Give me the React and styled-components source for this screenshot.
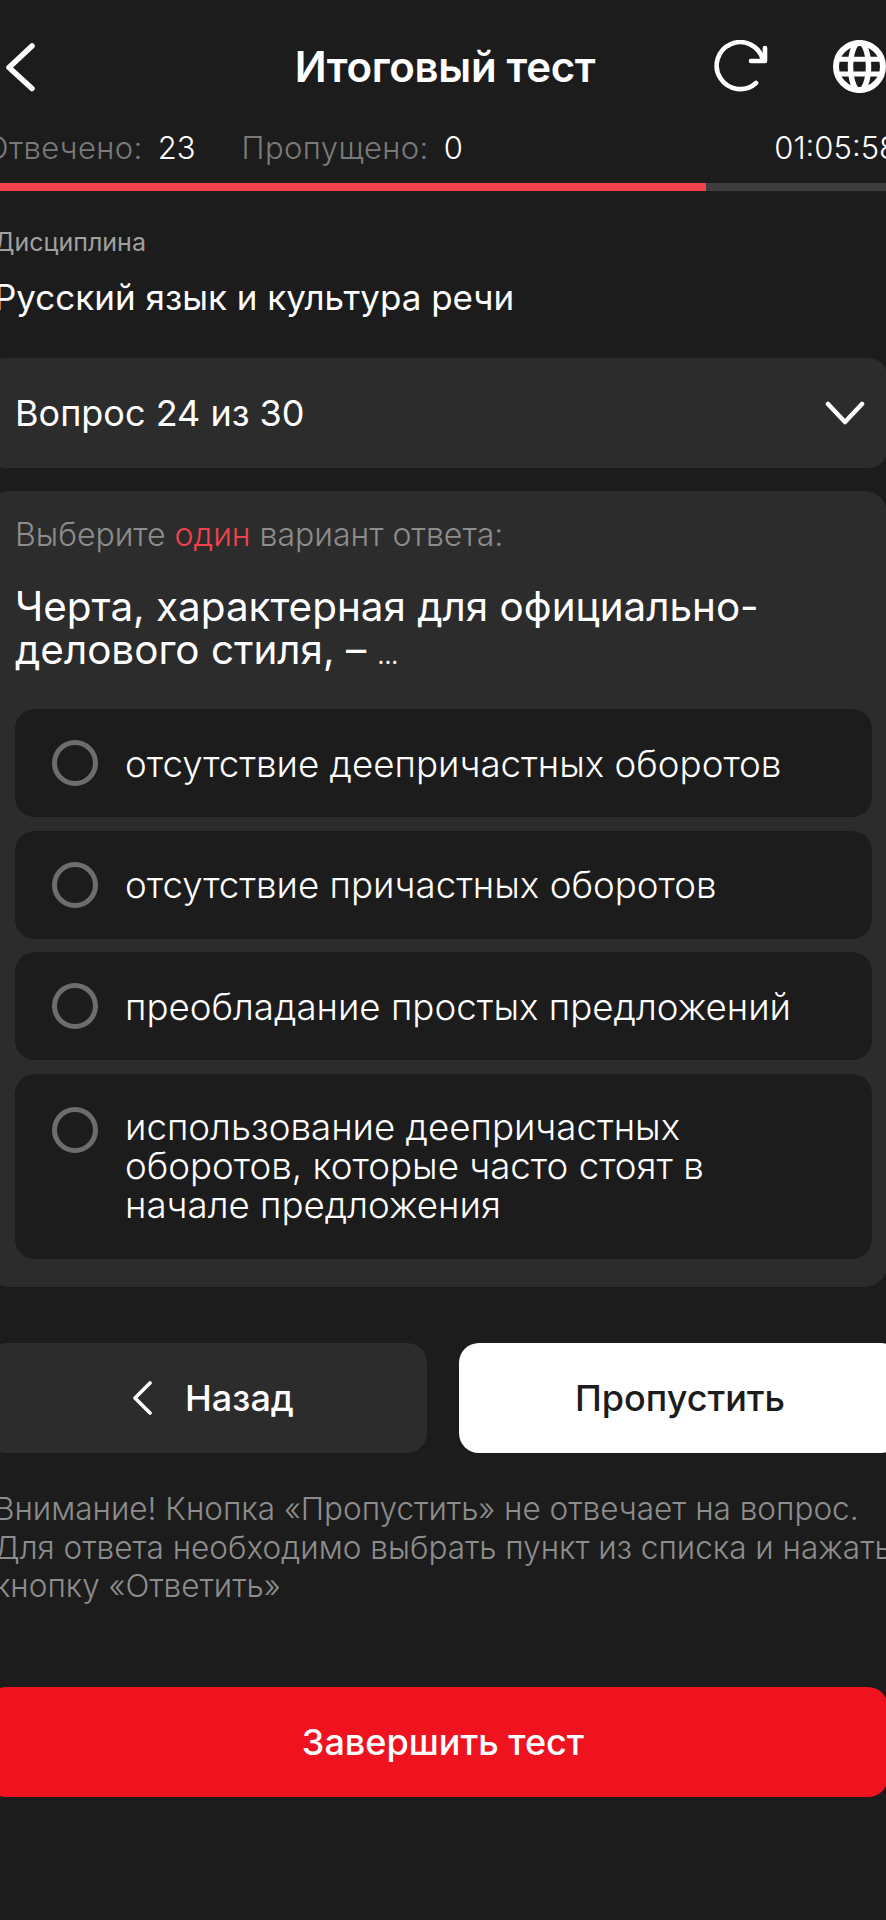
import React from "react"
import styled, { createGlobalStyle } from "styled-components"

const GlobalStyle = createGlobalStyle`
  html, body {
    margin: 0;
    padding: 0;
    background: #1c1c1c;
    font-family: "Inter", "Liberation Sans", sans-serif;
  }
  * {
    box-sizing: border-box;
  }
`

const Page = styled.div`
  width: 886px;
  height: 1920px;
  overflow: hidden;
  background: #1c1c1c;
  color: #fff;
`

const Header = styled.header`
  display: grid;
  grid-template-columns: 1fr auto 1fr;
  align-items: center;
  height: 53px;
  margin-top: 40px;
  padding: 0 2px 0 6px;
`

const Title = styled.h1`
  margin: 0;
  font-size: 42px;
  line-height: 52px;
  font-weight: 600;
  letter-spacing: -0.3px;
`

const HeaderActions = styled.div`
  display: flex;
  justify-content: flex-end;
  align-items: center;
  gap: 62px;
  margin-right: -2px;
`

const IconButton = styled.span`
  display: flex;
`

const Stats = styled.div`
  display: flex;
  align-items: center;
  height: 40px;
  margin: 34px -12px 0 -15px;
  font-size: 31px;
  font-weight: 300;
`

const StatLabel = styled.span`
  color: #7a7a7a;
  margin-right: 15px;
  letter-spacing: 0.4px;
`

const StatValue = styled.span`
  color: #fff;
  margin-right: 46px;
`

const Timer = styled.span`
  margin-left: auto;
`

const Progress = styled.div`
  height: 8px;
  margin-top: 16px;
  background: #3d3d3d;
`

const ProgressFill = styled.div`
  height: 100%;
  width: ${p => p.$value};
  background: #f5414e;
`

const Discipline = styled.section`
  margin: 36px 0 0 -6px;
`

const DisciplineLabel = styled.div`
  color: #a0a0a0;
  font-size: 25px;
  line-height: 30px;
`

const DisciplineName = styled.div`
  margin-top: 19px;
  font-size: 35px;
  line-height: 42px;
  font-weight: 400;
`

const QuestionSelect = styled.div`
  display: flex;
  align-items: center;
  justify-content: space-between;
  height: 110px;
  margin: 40px -2px 0 -14px;
  padding: 0 23px 0 29px;
  background: #2c2c2c;
  border-radius: 20px;
  font-size: 36px;
`

const QuestionCard = styled.section`
  margin: 23px -2px 0 -14px;
  height: 796px;
  padding: 26px 16px 0 29px;
  background: #2c2c2c;
  border-radius: 24px;
`

const Hint = styled.div`
  color: #8d8d8d;
  font-size: 32px;
  line-height: 36px;
  font-weight: 300;
`

const Accent = styled.span`
  color: #f5414e;
`

const QuestionText = styled.h2`
  margin: 32px 0 0;
  font-size: 40.4px;
  line-height: 43px;
  font-weight: 400;
`

const Ellipsis = styled.span`
  font-size: 24px;
`

const Options = styled.div`
  display: flex;
  flex-direction: column;
  gap: 13.5px;
  margin-top: 32px;
`

const Option = styled.div`
  display: flex;
  align-items: ${p => (p.$multiline ? "flex-start" : "center")};
  gap: 27px;
  padding: ${p => (p.$multiline ? "33px 72px 35px 37px" : "0 30px 0 37px")};
  min-height: 108px;
  background: #1c1c1c;
  border-radius: 20px;
`

const Radio = styled.span`
  flex: none;
  width: 46px;
  height: 46px;
  border: 5px solid #6d6d6d;
  border-radius: 50%;
`

const OptionText = styled.span`
  font-size: 36.7px;
  line-height: 39px;
  font-weight: 300;
`

const Actions = styled.div`
  display: grid;
  grid-template-columns: 441px 1fr;
  gap: 32px;
  margin: 56px -15px 0 -14px;
`

const Button = styled.button`
  display: flex;
  align-items: center;
  justify-content: center;
  gap: 30px;
  height: 110px;
  padding: 0 0 0 ${p => p.$inset || 0}px;
  border: 0;
  border-radius: 20px;
  background: ${p => p.$bg};
  color: ${p => p.$fg};
  font-family: inherit;
  font-size: 36px;
  font-weight: 500;
`

const Warning = styled.p`
  margin: 37px -30px 0 -6px;
  color: #8d8d8d;
  font-size: 31.5px;
  line-height: 38.5px;
  font-weight: 300;
`

const FinishButton = styled(Button)`
  width: 902px;
  margin: 81px -2px 0 -14px;
`

const BackIcon = () => (
  <svg width="36" height="53" viewBox="0 0 36 53" fill="none" stroke="#fff" strokeWidth="5.5" strokeLinecap="round" strokeLinejoin="round">
    <path d="M26 6 3 27.5 26 48.5" />
  </svg>
)

const RefreshIcon = () => (
  <svg width="60" height="53" viewBox="0 0 60 53" fill="none" stroke="#fff" strokeWidth="4.6" strokeLinecap="round" strokeLinejoin="round">
    <path d="M52 20A23.5 23.5 0 1 0 45 43" />
    <path d="M54 8V21H40" />
  </svg>
)

const GlobeIcon = () => (
  <svg width="53" height="53" viewBox="0 0 53 53" fill="none" stroke="#fff" strokeWidth="5">
    <circle cx="26.5" cy="26.5" r="23.5" strokeWidth="6" />
    <ellipse cx="26.5" cy="26.5" rx="9" ry="24" strokeWidth="5.5" />
    <path d="M5 19.2H48M5 34H48" />
  </svg>
)

const ChevronDown = () => (
  <svg width="40" height="24" viewBox="0 0 40 24" fill="none" stroke="#fff" strokeWidth="4.5" strokeLinecap="round" strokeLinejoin="round">
    <path d="M3 3 20 21 37 3" />
  </svg>
)

const SmallBack = () => (
  <svg width="24" height="34" viewBox="0 0 24 34" fill="none" stroke="#fff" strokeWidth="3.6" strokeLinecap="round" strokeLinejoin="round">
    <path d="M19 2 4 17 19 32" />
  </svg>
)

const options = [
  "отсутствие деепричастных оборотов",
  "отсутствие причастных оборотов",
  "преобладание простых предложений",
  "использование деепричастных оборотов, которые часто стоят в начале предложения",
]

export default function App() {
  return (
    <Page>
      <GlobalStyle />
      <Header>
        <IconButton>
          <BackIcon />
        </IconButton>
        <Title>Итоговый тест</Title>
        <HeaderActions>
          <IconButton>
            <RefreshIcon />
          </IconButton>
          <IconButton>
            <GlobeIcon />
          </IconButton>
        </HeaderActions>
      </Header>

      <Stats>
        <StatLabel>Отвечено:</StatLabel>
        <StatValue>23</StatValue>
        <StatLabel>Пропущено:</StatLabel>
        <StatValue>0</StatValue>
        <Timer>01:05:58</Timer>
      </Stats>

      <Progress>
        <ProgressFill $value="79.7%" />
      </Progress>

      <Discipline>
        <DisciplineLabel>Дисциплина</DisciplineLabel>
        <DisciplineName>Русский язык и культура речи</DisciplineName>
      </Discipline>

      <QuestionSelect>
        Вопрос 24 из 30
        <ChevronDown />
      </QuestionSelect>

      <QuestionCard>
        <Hint>
          Выберите <Accent>один</Accent> вариант ответа:
        </Hint>
        <QuestionText>
          Черта, характерная для официально-делового стиля, – <Ellipsis>...</Ellipsis>
        </QuestionText>
        <Options>
          {options.map((text, i) => (
            <Option key={text} $multiline={i === 3}>
              <Radio />
              <OptionText>{text}</OptionText>
            </Option>
          ))}
        </Options>
      </QuestionCard>

      <Actions>
        <Button $bg="#2c2c2c" $fg="#fff" $inset={12}>
          <SmallBack />
          Назад
        </Button>
        <Button $bg="#fff" $fg="#1c1c1c">Пропустить</Button>
      </Actions>

      <Warning>
        Внимание! Кнопка «Пропустить» не отвечает на вопрос.
        <br />
        Для ответа необходимо выбрать пункт из списка и нажать
        <br />
        кнопку «Ответить»
      </Warning>

      <FinishButton $bg="#ee131f" $fg="#fff" $inset={12}>Завершить тест</FinishButton>
    </Page>
  )
}
